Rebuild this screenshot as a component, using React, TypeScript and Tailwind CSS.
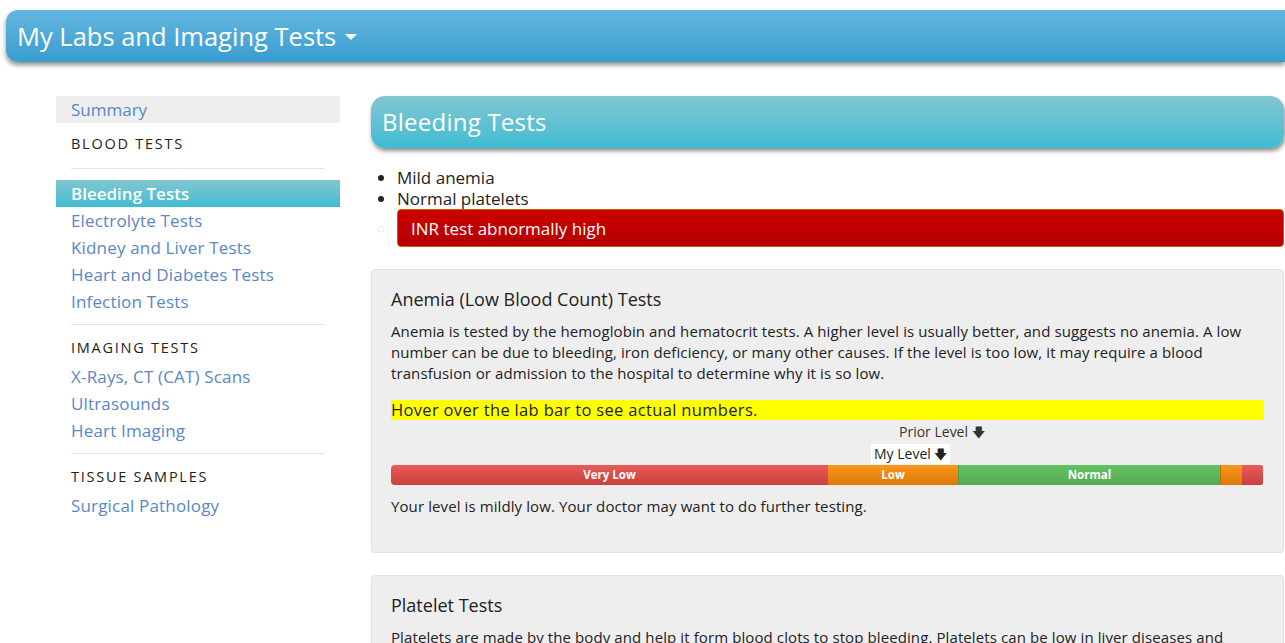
import React from "react";

const font = { fontFamily: "'Open Sans', 'Noto Sans', sans-serif" };

type NavItem = { label: string; active?: boolean };

const bloodTests: NavItem[] = [
  { label: "Bleeding Tests", active: true },
  { label: "Electrolyte Tests" },
  { label: "Kidney and Liver Tests" },
  { label: "Heart and Diabetes Tests" },
  { label: "Infection Tests" },
];

const imagingTests: NavItem[] = [
  { label: "X-Rays, CT (CAT) Scans" },
  { label: "Ultrasounds" },
  { label: "Heart Imaging" },
];

const segments = [
  { label: "Very Low", width: 437, cls: "bg-gradient-to-b from-[#e85b58] to-[#c9403d]" },
  { label: "Low", width: 130, cls: "bg-gradient-to-b from-[#f9981e] to-[#de7806]" },
  { label: "Normal", width: 262, cls: "bg-gradient-to-b from-[#62c462] to-[#56a956] border-l border-[#4e9e4e]" },
  { label: "", width: 22, cls: "bg-gradient-to-b from-[#f9981e] to-[#de7806] border-l border-[#c96a00]" },
  { label: "", width: 21, cls: "bg-gradient-to-b from-[#e85b58] to-[#c9403d]" },
];

const NavLink = ({ item }: { item: NavItem }) => (
  <a
    href="#"
    className={
      item.active
        ? "block h-[27px] pl-[15px] text-[17px] leading-[27px] font-semibold text-white bg-gradient-to-b from-[#7fc6cf] to-[#3dbcd3]"
        : "block h-[27px] pl-[15px] text-[17px] leading-[27px] tracking-[0.01em] text-[#5a87c6]"
    }
  >
    {item.label}
  </a>
);

const Heading = ({ children }: { children: React.ReactNode }) => (
  <div className="mt-[12px] h-[22px] pl-[15px] text-[14.5px] leading-[22px] tracking-[0.12em] text-[#222]">
    {children}
  </div>
);

const Divider = () => <div className="ml-[15px] mr-[16px] h-px bg-[#e3e3e3]" />;

const LabBar = () => (
  <div className="relative mt-[2px]">
    <div className="relative h-[43px]">
      <div
        className="absolute top-0 h-[20px] whitespace-nowrap text-[14px] leading-[20px] text-[#333]"
        style={{ left: 508 }}
      >
        Prior Level <span className="text-[13px]">🡇</span>
      </div>
      <div
        className="absolute top-[22px] h-[20px] whitespace-nowrap bg-white px-[3px] text-[14px] leading-[20px] text-[#222]"
        style={{ left: 480 }}
      >
        My Level <span className="text-[13px]">🡇</span>
      </div>
    </div>
    <div className="flex h-[20px] overflow-hidden rounded-[4px]">
      {segments.map((s, i) => (
        <div
          key={i}
          className={`${s.cls} flex items-center justify-center text-[11.5px] font-bold text-white`}
          style={{ width: s.width }}
        >
          {s.label}
        </div>
      ))}
    </div>
  </div>
);

export default function App() {
  return (
    <div className="min-h-screen overflow-hidden bg-white text-[#222]" style={font}>
      <div className="pl-[6px] pt-[10px]">
        <div className="flex h-[52px] items-center rounded-l-[12px] bg-gradient-to-b from-[#63b6de] to-[#379dd1] pl-[11px] shadow-[0_3px_5px_rgba(0,0,0,0.45)]">
          <span className="text-[25.5px] text-white">My Labs and Imaging Tests</span>
          <span className="ml-[9px] mt-[2px] h-0 w-0 border-x-[6px] border-t-[6px] border-x-transparent border-t-white" />
        </div>
      </div>

      <div className="mt-[34px] flex">
        <nav className="ml-[56px] w-[284px] shrink-0">
          <a href="#" className="block h-[27px] bg-[#eeeeee] pl-[15px] text-[17px] leading-[27px] text-[#5a87c6]">
            Summary
          </a>
          <div className="mt-[10px] h-[22px] pl-[15px] text-[14.5px] leading-[22px] tracking-[0.12em] text-[#222]">
            BLOOD TESTS
          </div>
          <div className="mt-[13px]">
            <Divider />
          </div>
          <div className="mt-[11px]">
            {bloodTests.map((t) => (
              <NavLink key={t.label} item={t} />
            ))}
          </div>
          <div className="mt-[9px]">
            <Divider />
          </div>
          <Heading>IMAGING TESTS</Heading>
          <div className="mt-[4px]">
            {imagingTests.map((t) => (
              <NavLink key={t.label} item={t} />
            ))}
          </div>
          <div className="mt-[9px]">
            <Divider />
          </div>
          <Heading>TISSUE SAMPLES</Heading>
          <div className="mt-[4px]">
            <NavLink item={{ label: "Surgical Pathology" }} />
          </div>
        </nav>

        <main className="ml-[31px] w-[913px] shrink-0">
          <div className="flex h-[52px] items-center rounded-[14px] bg-gradient-to-b from-[#80c6d0] to-[#3cbcd3] pl-[11px] shadow-[1px_3px_4px_rgba(0,0,0,0.45)]">
            <h1 className="text-[24px] tracking-[0.01em] text-white">Bleeding Tests</h1>
          </div>

          <ul className="mt-[19px] list-disc pl-[26px] text-[17px] leading-[21px] text-[#222]">
            <li>Mild anemia</li>
            <li>Normal platelets</li>
            <li className="list-[circle] marker:text-[#eee]">
              <div className="flex h-[38px] items-center rounded-[4px] border border-[#d05a10] bg-gradient-to-b from-[#cc0000] to-[#b50000] pl-[13px] text-white">
                INR test abnormally high
              </div>
            </li>
          </ul>

          <section className="mt-[22px] rounded-[4px] border border-[#e0e0e0] bg-[#eeeeee] px-[19px] pb-[35px] pt-[18px]">
            <h2 className="text-[18px] leading-[22px] text-[#222]">Anemia (Low Blood Count) Tests</h2>
            <p className="mt-[11px] text-[15px] leading-[21px] tracking-[0.1px] text-[#222]">
              Anemia is tested by the hemoglobin and hematocrit tests. A higher level is usually better, and suggests no
              anemia. A low number can be due to bleeding, iron deficiency, or many other causes. If the level is too low,
              it may require a blood transfusion or admission to the hospital to determine why it is so low.
            </p>
            <div className="mt-[16px] h-[20px] bg-[#ffff00] text-[16.5px] leading-[20px] tracking-[0.02em] text-[#222]">
              Hover over the lab bar to see actual numbers.
            </div>
            <LabBar />
            <p className="mt-[11px] text-[15px] leading-[21px] tracking-[0.1px] text-[#222]">
              Your level is mildly low. Your doctor may want to do further testing.
            </p>
          </section>

          <section className="mt-[22px] rounded-[4px] border border-[#e0e0e0] bg-[#eeeeee] px-[19px] pb-[35px] pt-[18px]">
            <h2 className="text-[18px] leading-[22px] text-[#222]">Platelet Tests</h2>
            <p className="mt-[11px] text-[15px] leading-[21px] tracking-[0.1px] text-[#222]">
              Platelets are made by the body and help it form blood clots to stop bleeding. Platelets can be low in liver
              diseases and many other conditions.
            </p>
          </section>
        </main>
      </div>
    </div>
  );
}
